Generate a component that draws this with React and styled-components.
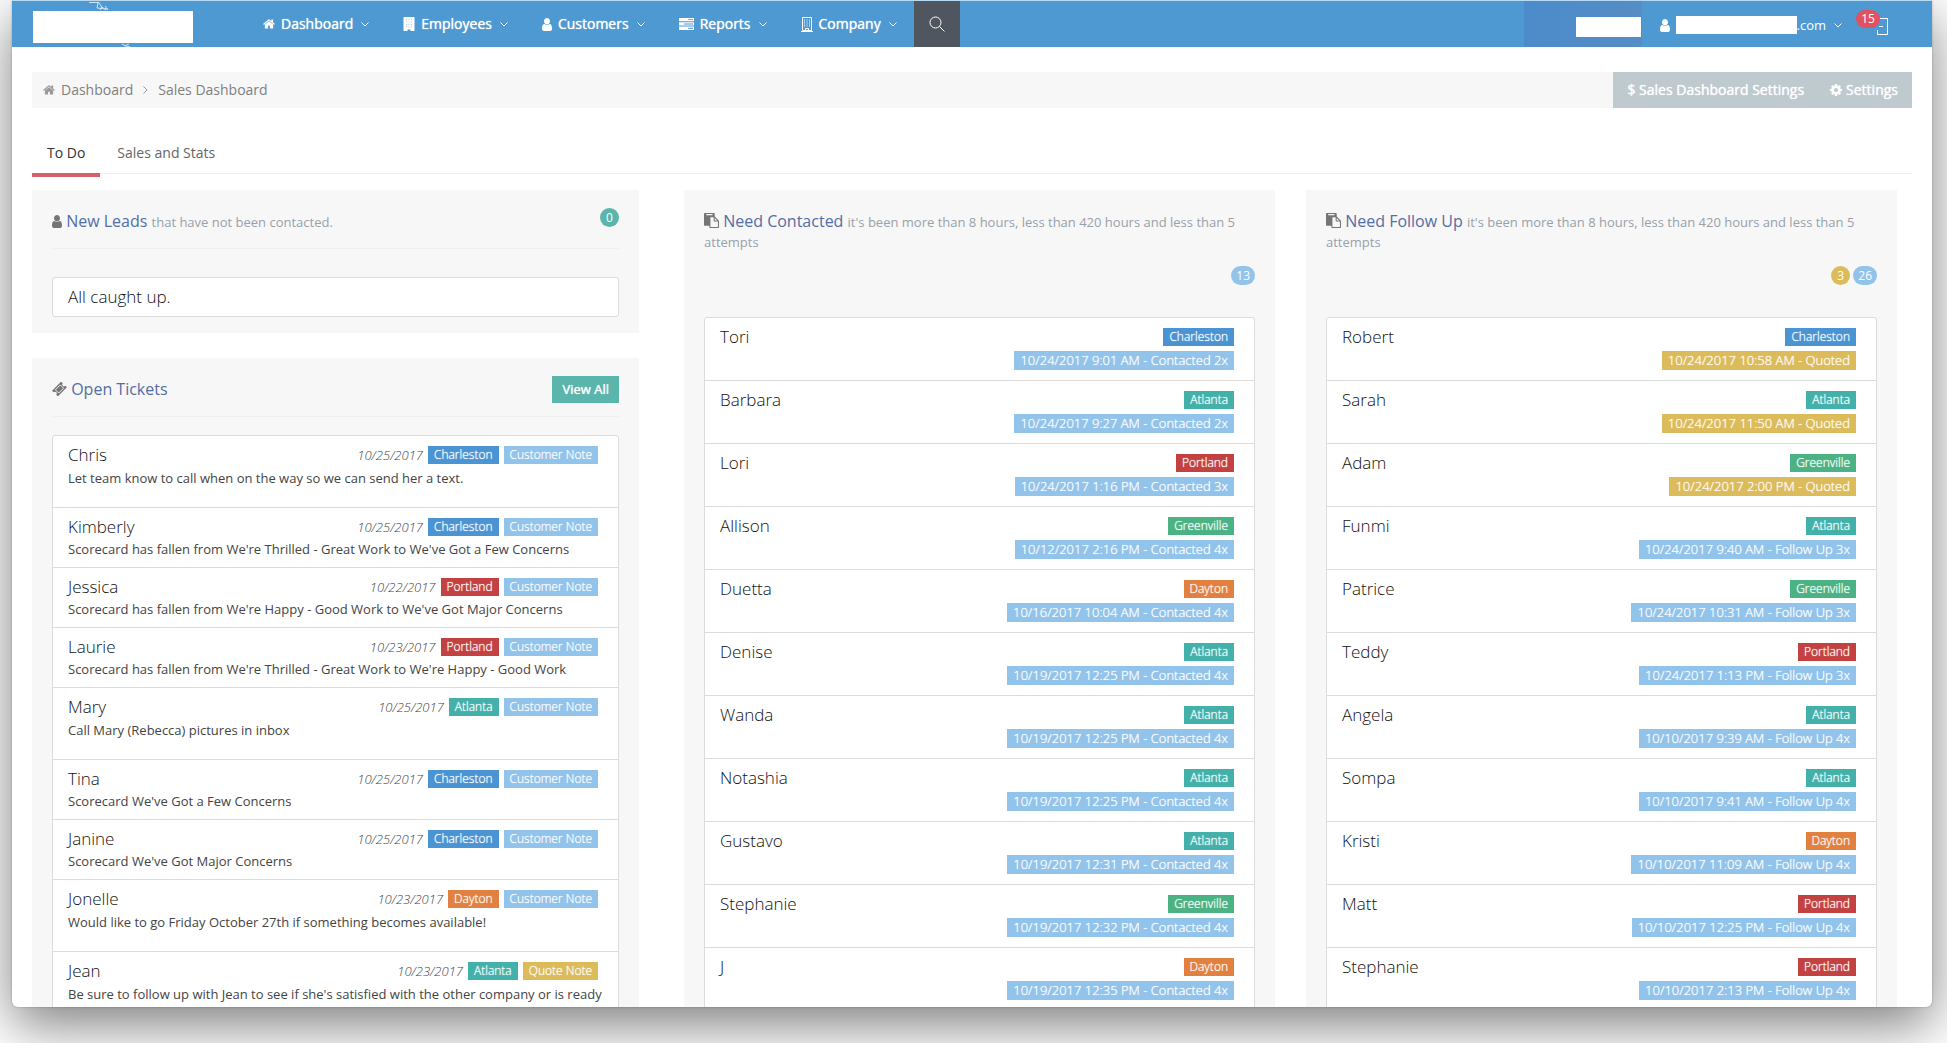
import React from 'react';
import styled, { createGlobalStyle } from 'styled-components';

const colors = {
    Charleston: '#4a94d3',
    Atlanta: '#43b1a9',
    Portland: '#c34141',
    Greenville: '#4bb283',
    Dayton: '#e2813f',
    info: '#92c3ea',
    quote: '#dcbb5a',
    teal: '#5ab5ab'
};

const GlobalStyle = createGlobalStyle`
    * {
        box-sizing: border-box;
    }
    body {
        margin: 0;
        height: 100vh;
        overflow: hidden;
        background: #fff;
        font-family: 'Open Sans', sans-serif;
        font-size: 14px;
        line-height: 20px;
        color: #333;
    }
    a {
        color: inherit;
        text-decoration: none;
    }
    button {
        border: 0;
        padding: 0;
        background: none;
        color: inherit;
        font: inherit;
        cursor: pointer;
    }
`;

const Window = styled.div`
    height: calc(100vh - 36px);
    margin: 0 15px 0 12px;
    background: #fff;
    border-radius: 0 0 6px 6px;
    box-shadow: 0 18px 54px rgba(0, 0, 0, 0.51), 0 0 2px rgba(0, 0, 0, 0.3);
`;

const Clip = styled.div`
    height: 100%;
    overflow: hidden;
    border-radius: inherit;
`;

const Header = styled.header`
    display: flex;
    height: 47px;
    padding: 0 20px;
    border-top: 1px solid #b5d9f2;
    background: #4e99d2;
    color: #fff;
`;

const Brand = styled.a`
    position: relative;
    width: 162px;
    margin-right: 52px;
`;

const BrandPlate = styled.span`
    display: block;
    width: 160px;
    height: 32px;
    margin: 10px 0 0 1px;
    background: #fff;
`;

const BrandMark = styled.svg`
    position: absolute;
    top: 0;
    left: 0;
`;

const Nav = styled.nav`
    display: flex;
    flex: 1;
`;

const NavItem = styled.button`
    display: flex;
    align-items: center;
    gap: 6px;
    padding: 0 17px;
    text-shadow: 0 0 1px #fff;
    svg:last-child {
        margin-left: 2px;
    }
`;

const SearchButton = styled.button`
    display: flex;
    align-items: center;
    justify-content: center;
    width: 46px;
    background: #50565f;
`;

const Account = styled.div`
    display: flex;
    align-items: center;
`;

const Switcher = styled.div`
    display: flex;
    align-items: center;
    justify-content: flex-end;
    width: 118px;
    height: 46px;
    padding: 6px 1px 0 0;
    margin-right: 18px;
    background: linear-gradient(90deg, #4c8bcb, #558dc4);
`;

const Redacted = styled.span`
    width: ${props => props.$width}px;
    height: ${props => props.$height}px;
    background: #fff;
`;

const UserMenu = styled.button`
    display: flex;
    align-items: center;
    margin-right: 34px;
    padding-top: 2px;
    font-size: 13px;
    svg:first-child {
        margin-right: 6px;
    }
    svg:last-child {
        margin-left: 8px;
    }
`;

const Inbox = styled.button`
    position: relative;
    display: flex;
    margin-right: 24px;
    padding-top: 4px;
`;

const InboxCount = styled.span`
    position: absolute;
    top: -4px;
    right: 8px;
    width: 24px;
    border-radius: 9px;
    background: #e0525f;
    font-size: 12px;
    line-height: 18px;
    text-align: center;
`;

const Main = styled.main`
    padding: 25px 20px 0;
`;

const Crumbs = styled.div`
    display: flex;
    justify-content: space-between;
    height: 36px;
    background: #f7f7f7;
    color: #808080;
`;

const CrumbPath = styled.nav`
    display: flex;
    align-items: center;
    gap: 6px;
    padding-left: 11px;
    svg {
        color: #999;
    }
`;

const Separator = styled.svg`
    margin: 0 4px;
`;

const CrumbActions = styled.div`
    display: flex;
    align-items: center;
    gap: 26px;
    padding: 0 14px;
    background: #bfcacf;
    color: #fff;
    text-shadow: 0 0 1px #fff;
`;

const CrumbAction = styled.button`
    display: flex;
    align-items: center;
    gap: 4px;
    text-shadow: inherit;
`;

const Tabs = styled.div`
    display: flex;
    gap: 2px;
    margin: 22px 0 13px;
    height: 47px;
    background: linear-gradient(#eee, #eee) 0 43px / 100% 1px no-repeat;
`;

const Tab = styled.button`
    padding: 2px 15px 0;
    border-bottom: 4px solid ${props => props.$active ? '#d7606e' : 'transparent'};
    color: ${props => props.$active ? '#333' : '#666'};
`;

const Columns = styled.div`
    display: grid;
    grid-template-columns: 620fr 590fr 590fr;
    gap: 31px;
    margin-right: 15px;
`;

const Column = styled.div`
    display: flex;
    flex-direction: column;
    gap: 25px;
    padding-right: ${props => props.$wide ? '14px' : 0};
`;

const Panel = styled.section`
    padding: 18px 20px 16px;
    background: #f7f7f7;
`;

const PanelHead = styled.div`
    display: flex;
    justify-content: space-between;
    align-items: flex-start;
    height: 41px;
    margin-bottom: ${props => props.$close ? 18 : 28}px;
    border-bottom: 1px solid #f0f0f0;
`;

const Title = styled.h2`
    margin: 0;
    padding-top: 3px;
    font-size: 16px;
    font-weight: 400;
    line-height: 20px;
    color: #536ea5;
    svg {
        color: #757575;
        vertical-align: -1px;
    }
`;

const Hint = styled.small`
    font-size: 13px;
    line-height: 1;
    color: #98a1ab;
`;

const CountRow = styled.div`
    display: flex;
    justify-content: flex-end;
    gap: 3px;
    margin: 15px 0 32px;
`;

const Count = styled.span`
    min-width: 19px;
    padding: 0 5px;
    border-radius: 10px;
    background: ${props => props.$color};
    color: #fff;
    font-size: 12px;
    line-height: 19px;
    text-align: center;
`;

const ViewAll = styled.button`
    padding: 0 10px;
    background: ${colors.teal};
    color: #fff;
    font-size: 13px;
    line-height: 27px;
    text-shadow: 0 0 1px #fff;
`;

const List = styled.ul`
    margin: 0;
    padding: 0;
    list-style: none;
    border: 1px solid #dcdcdc;
    border-radius: 3px;
    background: #fff;
`;

const Empty = styled.p`
    margin: 0;
    padding: 9px 15px;
    border: 1px solid #dcdcdc;
    border-radius: 3px;
    background: #fff;
    font-size: 17px;
    font-weight: 300;
    color: #111;
`;

const Ticket = styled.li`
    height: ${props => props.$tall ? 72 : 60}px;
    padding: 9px 15px 0;
    border-bottom: 1px solid #dcdcdc;
    overflow: hidden;
`;

const TicketTop = styled.div`
    display: flex;
    align-items: center;
    gap: 5px;
    padding-right: 5px;
`;

const Name = styled.span`
    flex: 1;
    font-size: 17px;
    font-weight: 300;
    line-height: 18px;
    color: #111;
`;

const TicketDate = styled.em`
    font-size: 13px;
    font-weight: 300;
    color: #444;
`;

const Note = styled.p`
    margin: ${props => props.$tall ? '3px' : '2px'} 0 0;
    font-size: 13px;
    color: #444;
`;

const Badge = styled.span`
    padding: 0 6px;
    background: ${props => props.$color};
    color: #fff;
    font-size: ${props => props.$status ? 13 : 12}px;
    font-weight: 300;
    line-height: ${props => props.$status ? 19 : 18}px;
    text-shadow: 0 0 1px #fff;
`;

const Contact = styled.li`
    display: flex;
    height: 63px;
    padding: 10px 20px 0 15px;
    border-bottom: 1px solid #dcdcdc;
`;

const Labels = styled.div`
    display: flex;
    flex-direction: column;
    align-items: flex-end;
    gap: 5px;
`;

const HOME = 'M1472 992v480q0 26-19 45t-45 19h-384v-384h-256v384h-384q-26 0-45-19t-19-45v-480q0-1 .5-3t.5-3l575-474 575 474q1 2 1 6zm223-69l-62 74q-8 9-21 11h-3q-13 0-21-7l-692-577-692 577q-12 8-24 7-13-2-21-11l-62-74q-8-10-7-23.5t11-21.5l719-599q32-26 76-26t76 26l244 204v-195q0-14 9-23t23-9h192q14 0 23 9t9 23v408l219 182q10 8 11 21.5t-7 23.5z';
const USER = 'M1536 1399q0 109-62.5 187t-150.5 78h-854q-88 0-150.5-78t-62.5-187q0-85 8.5-160.5t31.5-152 58.5-131 94-89 134.5-34.5q131 128 313 128t313-128q76 0 134.5 34.5t94 89 58.5 131 31.5 152 8.5 160.5zm-256-887q0 159-112.5 271.5t-271.5 112.5-271.5-112.5-112.5-271.5 112.5-271.5 271.5-112.5 271.5 112.5 112.5 271.5z';
const COG = 'M1152 896q0-106-75-181t-181-75-181 75-75 181 75 181 181 75 181-75 75-181zm512-109v222q0 12-8 23t-20 13l-185 28q-19 54-39 91 35 50 107 138 10 12 10 25t-9 23q-27 37-99 108t-94 71q-12 0-26-9l-138-108q-44 23-91 38-16 136-29 186-7 28-36 28h-222q-14 0-24.5-8.5t-11.5-21.5l-28-184q-49-16-90-37l-141 107q-10 9-25 9-14 0-25-11-126-114-165-168-7-10-7-23 0-12 8-23 15-21 51-66.5t54-70.5q-27-50-41-99l-183-27q-13-2-21-12.5t-8-23.5v-222q0-12 8-23t19-13l186-28q14-46 39-92-40-57-107-138-10-12-10-24 0-10 9-23 26-36 98.5-107.5t94.5-71.5q13 0 26 10l138 107q44-23 91-38 16-136 29-186 7-28 36-28h222q14 0 24.5 8.5t11.5 21.5l28 184q49 16 90 37l142-107q9-9 24-9 13 0 25 10 129 119 165 170 7 8 7 22 0 12-8 23-15 21-51 66.5t-54 70.5q26 50 41 98l183 28q13 2 21 12.5t8 23.5z';
const PASTE = 'M768 1664h896v-640h-416q-40 0-68-28t-28-68v-416h-384v1152zm256-1440v-64q0-13-9.5-22.5t-22.5-9.5h-704q-13 0-22.5 9.5t-9.5 22.5v64q0 13 9.5 22.5t22.5 9.5h704q13 0 22.5-9.5t9.5-22.5zm256 672h299l-299-299v299zm512 128v672q0 40-28 68t-68 28h-960q-40 0-68-28t-28-68v-160h-544q-40 0-68-28t-28-68v-1344q0-40 28-68t68-28h1088q40 0 68 28t28 68v328q21 13 36 28l408 408q28 28 48 76t20 88z';

const HomeIcon = () => (
    <svg width="12" height="12" viewBox="60 200 1672 1400" fill="currentColor"><path d={HOME} /></svg>
);

const UserIcon = () => (
    <svg width="10" height="13" viewBox="256 128 1280 1536" preserveAspectRatio="none" fill="currentColor"><path d={USER} /></svg>
);

const CogIcon = () => (
    <svg width="12" height="12" viewBox="128 128 1536 1536" fill="currentColor"><path d={COG} /></svg>
);

const PasteIcon = () => (
    <svg width="15" height="15" viewBox="0 0 1792 1792" fill="currentColor"><path d={PASTE} /></svg>
);

const TicketIcon = () => (
    <svg width="15" height="14" viewBox="0 0 24 24">
        <g transform="rotate(-45 12 12)">
            <path fill="currentColor" d="M1 5h22v4a3 3 0 0 0 0 6v4H1v-4a3 3 0 0 0 0-6z" />
            <path fill="none" stroke="#f7f7f7" strokeWidth="1.500" d="M6 8h12v8H6z" />
        </g>
    </svg>
);

const BuildingIcon = () => (
    <svg width="12" height="14" viewBox="0 0 12 14" fill="currentColor">
        <path fillRule="evenodd" d="M.5 0h11v14H7.500v-1.500h-3V14H.5zM3 2.200v.6h1v-.6zM5.500 2.200v.6h1v-.6zM8 2.200v.6h1v-.6zM3 4.700v.6h1v-.6zM5.500 4.700v.6h1v-.6zM8 4.700v.6h1v-.6zM3 7.200v.6h1v-.6zM5.500 7.200v.6h1v-.6zM8 7.200v.6h1v-.6zM3 9.700v.6h1v-.6zM5.500 9.700v.6h1v-.6zM8 9.700v.6h1v-.6z" />
    </svg>
);

const CompanyIcon = () => (
    <svg width="12" height="15" viewBox="0 0 12 15" fill="none" stroke="currentColor">
        <path d="M1.500 .5h9v13h-9zM0 14.500h12M4.500 14v-2.500h3V14" />
        <path d="M3 3h6M3 5h6M3 7h6M3 9h6" strokeDasharray="1 1.500" />
    </svg>
);

const ReportsIcon = () => (
    <svg width="15" height="12" viewBox="0 0 15 12" fill="currentColor">
        <path fillRule="evenodd" d="M0 0h15v3.300H0zM9 1.200v.9h5v-.9zM0 4.300h15v3.300H0zM5 5.500v.9h9v-.9zM0 8.600h15V12H0zM9 9.800v.9h5v-.9z" />
    </svg>
);

const Chevron = () => (
    <svg width="8" height="5" viewBox="0 0 8 5" fill="none" stroke="currentColor"><path d="M.5 .5L4 4 7.500 .5" /></svg>
);

const navItems = [
    { label: 'Dashboard', icon: HomeIcon },
    { label: 'Employees', icon: BuildingIcon },
    { label: 'Customers', icon: UserIcon },
    { label: 'Reports', icon: ReportsIcon },
    { label: 'Company', icon: CompanyIcon }
];

const tickets = [
    { name: 'Chris', date: '10/25/2017', city: 'Charleston', note: 'Let team know to call when on the way so we can send her a text.', tall: true },
    { name: 'Kimberly', date: '10/25/2017', city: 'Charleston', note: "Scorecard has fallen from We're Thrilled - Great Work to We've Got a Few Concerns" },
    { name: 'Jessica', date: '10/22/2017', city: 'Portland', note: "Scorecard has fallen from We're Happy - Good Work to We've Got Major Concerns" },
    { name: 'Laurie', date: '10/23/2017', city: 'Portland', note: "Scorecard has fallen from We're Thrilled - Great Work to We're Happy - Good Work" },
    { name: 'Mary', date: '10/25/2017', city: 'Atlanta', note: 'Call Mary (Rebecca) pictures in inbox', tall: true },
    { name: 'Tina', date: '10/25/2017', city: 'Charleston', note: "Scorecard We've Got a Few Concerns" },
    { name: 'Janine', date: '10/25/2017', city: 'Charleston', note: "Scorecard We've Got Major Concerns" },
    { name: 'Jonelle', date: '10/23/2017', city: 'Dayton', note: 'Would like to go Friday October 27th if something becomes available!', tall: true },
    { name: 'Jean', date: '10/23/2017', city: 'Atlanta', note: "Be sure to follow up with Jean to see if she's satisfied with the other company or is ready", quote: true, tall: true }
];

const needContacted = [
    ['Tori', 'Charleston', '10/24/2017 9:01 AM - Contacted 2x'],
    ['Barbara', 'Atlanta', '10/24/2017 9:27 AM - Contacted 2x'],
    ['Lori', 'Portland', '10/24/2017 1:16 PM - Contacted 3x'],
    ['Allison', 'Greenville', '10/12/2017 2:16 PM - Contacted 4x'],
    ['Duetta', 'Dayton', '10/16/2017 10:04 AM - Contacted 4x'],
    ['Denise', 'Atlanta', '10/19/2017 12:25 PM - Contacted 4x'],
    ['Wanda', 'Atlanta', '10/19/2017 12:25 PM - Contacted 4x'],
    ['Notashia', 'Atlanta', '10/19/2017 12:25 PM - Contacted 4x'],
    ['Gustavo', 'Atlanta', '10/19/2017 12:31 PM - Contacted 4x'],
    ['Stephanie', 'Greenville', '10/19/2017 12:32 PM - Contacted 4x'],
    ['J', 'Dayton', '10/19/2017 12:35 PM - Contacted 4x']
];

const needFollowUp = [
    ['Robert', 'Charleston', '10/24/2017 10:58 AM - Quoted'],
    ['Sarah', 'Atlanta', '10/24/2017 11:50 AM - Quoted'],
    ['Adam', 'Greenville', '10/24/2017 2:00 PM - Quoted'],
    ['Funmi', 'Atlanta', '10/24/2017 9:40 AM - Follow Up 3x'],
    ['Patrice', 'Greenville', '10/24/2017 10:31 AM - Follow Up 3x'],
    ['Teddy', 'Portland', '10/24/2017 1:13 PM - Follow Up 3x'],
    ['Angela', 'Atlanta', '10/10/2017 9:39 AM - Follow Up 4x'],
    ['Sompa', 'Atlanta', '10/10/2017 9:41 AM - Follow Up 4x'],
    ['Kristi', 'Dayton', '10/10/2017 11:09 AM - Follow Up 4x'],
    ['Matt', 'Portland', '10/10/2017 12:25 PM - Follow Up 4x'],
    ['Stephanie', 'Portland', '10/10/2017 2:13 PM - Follow Up 4x']
];

const TopBar = () => (
    <Header>
        <Brand href="#" aria-label="Home">
            <BrandPlate />
            <BrandMark width="162" height="46" viewBox="0 0 162 46" fill="none" stroke="#cfe5f5">
                <path d="M57 1.500h10l3 5M66 2l-1 5 11 1M68 9l2-3 4 3M73 5l3 4M90 43l4 2 4 1M92 45l5-2" />
            </BrandMark>
        </Brand>
        <Nav>
            {navItems.map(({ label, icon: Icon }) => (
                <NavItem key={label}>
                    <Icon />
                    {label}
                    <Chevron />
                </NavItem>
            ))}
            <SearchButton aria-label="Search">
                <svg width="16" height="16" viewBox="0 0 16 16" fill="none" stroke="currentColor">
                    <circle cx="6.500" cy="6.500" r="5.500" />
                    <path d="M10.500 10.500L15.500 15.500" />
                </svg>
            </SearchButton>
        </Nav>
        <Account>
            <Switcher><Redacted $width={65} $height={20} /></Switcher>
            <UserMenu>
                <UserIcon />
                <Redacted $width={121} $height={18} />
                .com
                <Chevron />
            </UserMenu>
            <Inbox aria-label="Notifications">
                <svg width="12" height="17" viewBox="0 0 12 17" fill="none" stroke="currentColor">
                    <path d="M1.500 4V.5h10v16h-10V12M3 8.500h4" />
                </svg>
                <InboxCount>15</InboxCount>
            </Inbox>
        </Account>
    </Header>
);

const ContactPanel = ({ title, counts, contacts }) => (
    <Panel>
        <Title>
            <PasteIcon /> {title} <Hint>it's been more than 8 hours, less than 420 hours and less than 5 attempts</Hint>
        </Title>
        <CountRow>
            {counts.map(([value, color]) => <Count key={value} $color={color}>{value}</Count>)}
        </CountRow>
        <List>
            {contacts.map(([name, city, status]) => (
                <Contact key={name}>
                    <Name>{name}</Name>
                    <Labels>
                        <Badge $color={colors[city]}>{city}</Badge>
                        <Badge $status $color={status.endsWith('Quoted') ? colors.quote : colors.info}>{status}</Badge>
                    </Labels>
                </Contact>
            ))}
        </List>
    </Panel>
);

const App = () => (
    <Window>
        <GlobalStyle />
        <Clip>
            <TopBar />
            <Main>
                <Crumbs>
                    <CrumbPath>
                        <HomeIcon />
                        <a href="#">Dashboard</a>
                        <Separator width="5" height="8" viewBox="0 0 5 8" fill="none" stroke="currentColor"><path d="M.5 .5L4 4 .5 7.500" /></Separator>
                        <a href="#">Sales Dashboard</a>
                    </CrumbPath>
                    <CrumbActions>
                        <CrumbAction>$ Sales Dashboard Settings</CrumbAction>
                        <CrumbAction><CogIcon />Settings</CrumbAction>
                    </CrumbActions>
                </Crumbs>
                <Tabs>
                    <Tab $active>To Do</Tab>
                    <Tab>Sales and Stats</Tab>
                </Tabs>
                <Columns>
                    <Column $wide>
                        <Panel>
                            <PanelHead>
                                <Title><UserIcon /> New Leads <Hint>that have not been contacted.</Hint></Title>
                                <Count $color={colors.teal}>0</Count>
                            </PanelHead>
                            <Empty>All caught up.</Empty>
                        </Panel>
                        <Panel>
                            <PanelHead $close>
                                <Title><TicketIcon /> Open Tickets</Title>
                                <ViewAll>View All</ViewAll>
                            </PanelHead>
                            <List>
                                {tickets.map(ticket => (
                                    <Ticket key={ticket.name} $tall={ticket.tall}>
                                        <TicketTop>
                                            <Name>{ticket.name}</Name>
                                            <TicketDate>{ticket.date}</TicketDate>
                                            <Badge $color={colors[ticket.city]}>{ticket.city}</Badge>
                                            <Badge $color={ticket.quote ? colors.quote : colors.info}>
                                                {ticket.quote ? 'Quote Note' : 'Customer Note'}
                                            </Badge>
                                        </TicketTop>
                                        <Note $tall={ticket.tall}>{ticket.note}</Note>
                                    </Ticket>
                                ))}
                            </List>
                        </Panel>
                    </Column>
                    <Column>
                        <ContactPanel title="Need Contacted" counts={[[13, colors.info]]} contacts={needContacted} />
                    </Column>
                    <Column>
                        <ContactPanel title="Need Follow Up" counts={[[3, colors.quote], [26, colors.info]]} contacts={needFollowUp} />
                    </Column>
                </Columns>
            </Main>
        </Clip>
    </Window>
);

export default App;
